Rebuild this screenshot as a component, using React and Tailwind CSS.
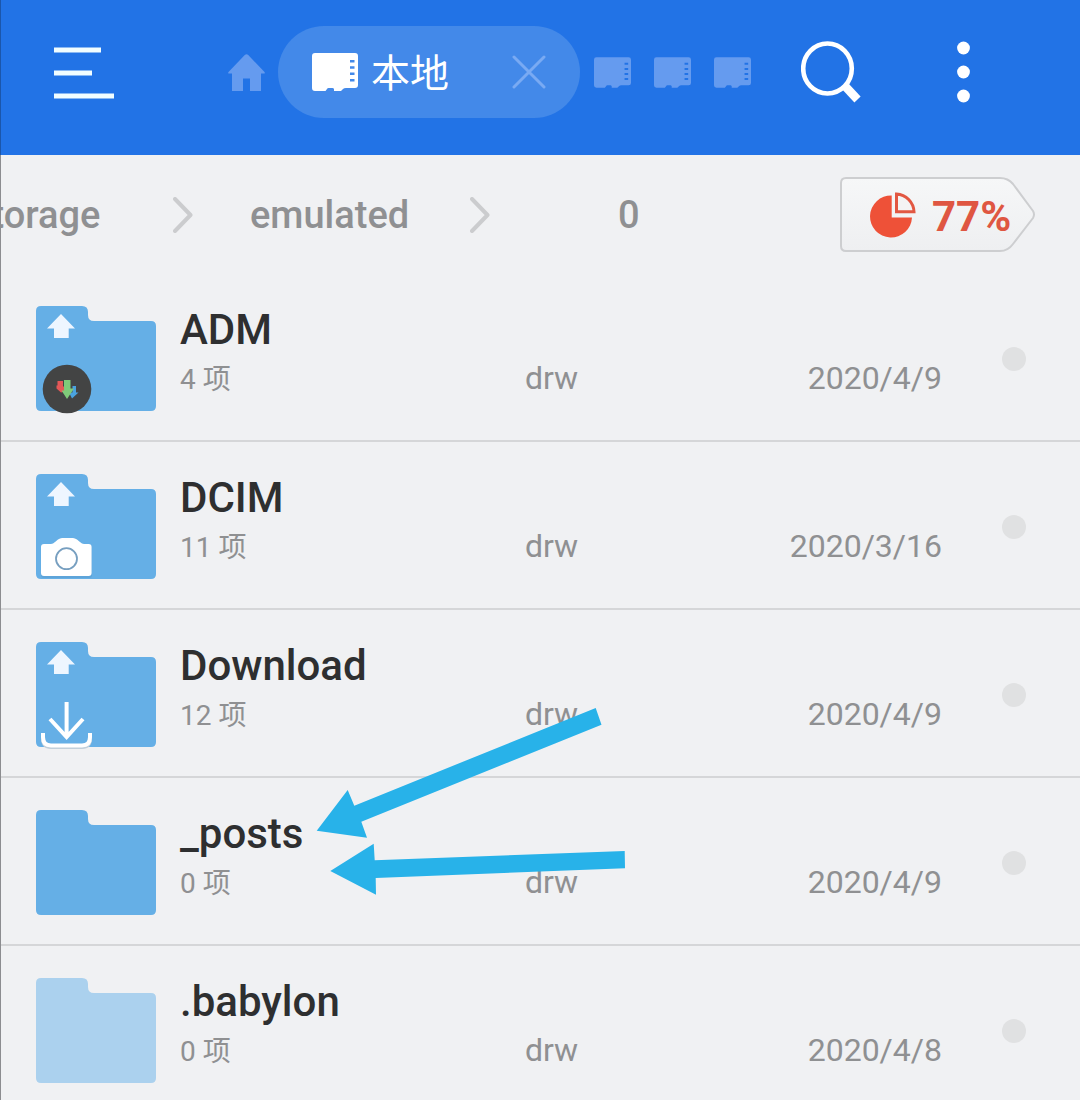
import React from "react";

const folders = [
  { name: "ADM", count: "4 项", date: "2020/4/9", badge: "adm", pinned: true },
  { name: "DCIM", count: "11 项", date: "2020/3/16", badge: "camera", pinned: true },
  { name: "Download", count: "12 项", date: "2020/4/9", badge: "download", pinned: true },
  { name: "_posts", count: "0 项", date: "2020/4/9" },
  { name: ".babylon", count: "0 项", date: "2020/4/8", hidden: true },
];

function CardIcon({ className }) {
  return (
    <svg viewBox="0 0 46 38" className={className} fill="currentColor" aria-hidden="true">
      <path
        fillRule="evenodd"
        d="M3 0H43Q46 0 46 3V32Q46 35 43 35H34Q32 35 31 36L29 38H22V36Q21.500 35 20.500 35H16.500Q15.500 35 15 36L13.500 38H3Q0 38 0 35V3Q0 0 3 0ZM38 7V9.500H42.500V7ZM38 13.300V15.800H42.500V13.300ZM38 19.600V22.100H42.500V19.600ZM38 25.900V28.400H42.500V25.900Z"
      />
    </svg>
  );
}

function Header() {
  return (
    <header className="flex h-[155px] items-center border-l border-[#1b56ab] bg-[#2273e6] pb-[11px] pl-[53px] pr-[110px] text-white">
      <button type="button" aria-label="Menu" className="shrink-0">
        <svg width="60" height="54" viewBox="0 0 60 54" fill="none" stroke="#f1fdff" strokeWidth="5">
          <path d="M0 5H47M0 28H38M0 51H60" />
        </svg>
      </button>
      <button type="button" aria-label="Home" className="ml-[114px] shrink-0 text-[#659bef]">
        <svg width="37" height="37" viewBox="0 0 37 37" fill="currentColor">
          <path d="M17 .8Q18.500-.5 20 .8L36.500 18Q37.300 19.500 36 19.500H33V37H22V24.500H15V37H4V19.500H1Q-.3 19.500 .5 18Z" />
        </svg>
      </button>
      <div className="ml-[13px] flex h-[92px] w-[302px] shrink-0 items-center rounded-full bg-[#4389e9] pl-[34px] pr-[34px]">
        <CardIcon className="h-[38px] w-[46px]" />
        <span className="ml-[13px] pt-1 text-[39px] leading-[48px]">本地</span>
        <button type="button" aria-label="Close tab" className="ml-auto">
          <svg width="34" height="34" viewBox="0 0 34 34" fill="none" stroke="#79aaf3" strokeWidth="3" strokeLinecap="round">
            <path d="M2 2L32 32M32 2L2 32" />
          </svg>
        </button>
      </div>
      <div className="ml-3.5 flex shrink-0 gap-[23px] text-[#659bef]">
        {[1, 2, 3].map((n) => (
          <button key={n} type="button" aria-label={`Storage tab ${n}`}>
            <CardIcon className="h-[31px] w-[37px]" />
          </button>
        ))}
      </div>
      <button type="button" aria-label="Search" className="ml-[50px] shrink-0">
        <svg width="60" height="62" viewBox="0 0 60 62" fill="none" stroke="#fff">
          <ellipse cx="26.500" cy="27.500" rx="24.300" ry="25" strokeWidth="4.600" />
          <path d="M43 44L56.500 58.500" strokeWidth="8.500" />
        </svg>
      </button>
      <button type="button" aria-label="More options" className="ml-auto shrink-0">
        <svg width="13" height="62" viewBox="0 0 13 62" fill="#fff">
          <circle cx="6.500" cy="7" r="6.400" />
          <circle cx="6.500" cy="31" r="6.400" />
          <circle cx="6.500" cy="55" r="6.400" />
        </svg>
      </button>
    </header>
  );
}

function Chevron({ className }) {
  return (
    <svg width="20" height="36" viewBox="0 0 20 36" fill="none" stroke="#cbccce" strokeWidth="4" strokeLinecap="round" strokeLinejoin="round" className={className} aria-hidden="true">
      <path d="M2 2L17.500 18L2 34" />
    </svg>
  );
}

function PathBar() {
  return (
    <nav aria-label="Path" className="flex h-[119px] items-center justify-between overflow-hidden pr-[45px]">
      <div className="-ml-[29px] flex items-center text-[38px] font-medium leading-[48px] text-[#8f9092]">
        <a href="#storage" className="w-[130px]">storage</a>
        <Chevron className="ml-[71px]" />
        <a href="#emulated" className="ml-[57px] w-[165px]">emulated</a>
        <Chevron className="ml-[55px]" />
        <a href="#0" className="ml-[128px]">0</a>
      </div>
      <button type="button" className="relative flex h-[75px] w-[195px] items-center pl-[30px] text-[42px] font-bold leading-[48px] text-[#df5642]">
        <svg className="absolute inset-0" width="195" height="75" viewBox="0 0 195 75" aria-hidden="true">
          <defs>
            <linearGradient id="tag" x1="0" y1="0" x2="0" y2="1">
              <stop offset="0" stopColor="#f6f7f8" />
              <stop offset="1" stopColor="#eeeff1" />
            </linearGradient>
          </defs>
          <path d="M6 1H160Q168 1 173 7L193 34Q195 37.500 193 41L173 67Q168 74 160 74H6Q1 74 1 69V6Q1 1 6 1Z" fill="url(#tag)" stroke="#cdced0" strokeWidth="2" />
        </svg>
        <svg className="relative" width="46" height="46" viewBox="0 0 46 46" aria-hidden="true">
          <path d="M21.700 3.500V25.500H42A21 21 0 1 1 21.700 3.500Z" fill="#ee5138" />
          <path d="M26.500 2A18.500 18.500 0 0 1 44 19.700H26.500Z" fill="#f4f3f3" stroke="#e25742" strokeWidth="3" />
        </svg>
        <span className="relative ml-4 pt-1">77%</span>
      </button>
    </nav>
  );
}

function FolderIcon({ badge, pinned, hidden }) {
  return (
    <svg width="120" height="105" viewBox="0 0 120 105" className="mt-8 shrink-0 overflow-visible" aria-hidden="true">
      <path d="M5 0H46Q52 0 52 6V9Q52 15 58 15H115Q120 15 120 20V100Q120 105 115 105H5Q0 105 0 100V5Q0 0 5 0Z" fill={hidden ? "#abd1ee" : "#65afe6"} />
      {pinned && <path d="M25 8L39 22.500H32.700V32H18V22.500H11Z" fill="#eef6ff" />}
      {badge === "adm" && (
        <g>
          <circle cx="31" cy="83" r="24.300" fill="#434444" />
          <path d="M21.500 75H27V80.500H29V85.500L25 86.500L20.500 82.500V79.500H21.500Z" fill="#e35757" />
          <path d="M36.500 80H40V86.500H42.500L36 92.500L33 86.500H36.500Z" fill="#4aa3df" />
          <path d="M28 74H34.500V82.500H38L31 93L25.500 84.500H28Z" fill="#7fca79" />
        </g>
      )}
      {badge === "camera" && (
        <g>
          <path d="M8 71H15Q17 71 19 69L22 66Q24 64 26 64H38Q40 64 42 66L44 69Q46 71 48 71H53Q56 71 56 74V101Q56 104 53 104H8Q5 104 5 101V74Q5 71 8 71Z" fill="#5799cb" opacity=".5" />
          <path d="M8 70H15Q17 70 19 68L22 65.500Q24 64 26 64H37Q39 64 41 65.500L44 68Q46 70 48 70H52.600Q55.600 70 55.600 73V99Q55.600 102 52.600 102H8Q5 102 5 99V73Q5 70 8 70Z" fill="#fff" />
          <circle cx="30.500" cy="84.700" r="10.500" fill="none" stroke="#779fc0" strokeWidth="1.800" />
        </g>
      )}
      {badge === "download" && (
        <g fill="none" strokeWidth="4">
          <path d="M7 92V96Q7 105 15 105H46Q54 105 54 96V92" stroke="#c1cfda" />
          <path d="M30.600 60V94M14 77L30.600 95L47 77M7 91V95Q7 103.500 15 103.500H46Q54 103.500 54 95V91" stroke="#fff" />
        </g>
      )}
    </svg>
  );
}

function FolderRow({ folder }) {
  return (
    <li className="flex h-[168px] items-start border-b-2 border-[#d5d6d8] pl-[35px] pr-[54px]">
      <FolderIcon badge={folder.badge} pinned={folder.pinned} hidden={folder.hidden} />
      <div className="ml-6 flex-1 pt-8">
        <a href={`#${folder.name}`} className="block text-[42px] font-medium leading-[48px] text-[#2e2f30]">
          {folder.name}
        </a>
        <div className="mt-1 grid grid-cols-[9fr_7fr_4fr] items-baseline text-[32px] leading-[40px] text-[#8f9092]">
          <span className="text-[28px]">{folder.count}</span>
          <span className="pl-0.5">drw</span>
          <span className="justify-self-end">{folder.date}</span>
        </div>
      </div>
      <input
        type="checkbox"
        aria-label={`Select ${folder.name}`}
        className="ml-[60px] mt-[73px] h-6 w-6 shrink-0 appearance-none rounded-full bg-[#e0e1e2] checked:bg-[#2273e6]"
      />
    </li>
  );
}

function PointerArrows() {
  return (
    <svg width="310" height="188" viewBox="316 708 310 188" fill="#28b2e9" className="pointer-events-none absolute left-[315px] top-[553px]" aria-hidden="true">
      <path d="M316.700 830.700L347.700 790L354.300 805.700L595.700 708L601.500 724.700L361.300 821.700L367 837.700Z" />
      <path d="M330.300 871L373.700 843.700L374.700 860.300L624.700 851L625 868.300L375.700 878L376 894.700Z" />
    </svg>
  );
}

export default function App() {
  return (
    <div className="h-screen overflow-hidden bg-[#f0f1f3] font-[Roboto,'Noto_Sans_CJK_SC',sans-serif]">
      <Header />
      <main className="relative border-l border-[#8c8d90]">
        <PathBar />
        <ul>
          {folders.map((folder) => (
            <FolderRow key={folder.name} folder={folder} />
          ))}
        </ul>
        <PointerArrows />
      </main>
    </div>
  );
}
